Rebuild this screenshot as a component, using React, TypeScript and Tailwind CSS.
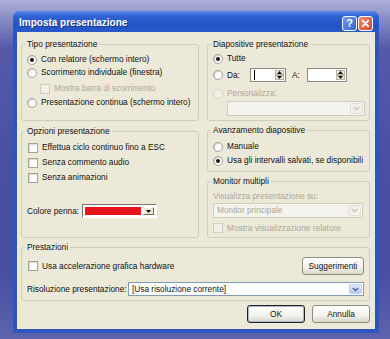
import * as React from "react";
import clsx from "clsx";

type BoxProps = { checked?: boolean; disabled?: boolean };

function Radio({ checked, disabled }: BoxProps) {
  return (
    <span
      className={clsx(
        "flex h-[10px] w-[10px] shrink-0 items-center justify-center rounded-full border",
        disabled
          ? "border-[#d3d0c4] bg-[#f3f1e8]"
          : "border-[#a3a195] bg-white shadow-[inset_1px_1px_1px_rgba(0,0,0,0.18)]"
      )}
    >
      {checked && <span className="h-[4px] w-[4px] rounded-full bg-[#151515]" />}
    </span>
  );
}

function Check({ disabled }: BoxProps) {
  return (
    <span
      className={clsx(
        "block h-[10px] w-[10px] shrink-0 border",
        disabled
          ? "border-[#cfccc0] bg-[#f1efe6]"
          : "border-[#a5a398] bg-white shadow-[inset_1px_1px_1px_rgba(0,0,0,0.15)]"
      )}
    />
  );
}

function Group({
  title,
  className,
  children,
}: {
  title: string;
  className?: string;
  children: React.ReactNode;
}) {
  return (
    <fieldset className={clsx("min-w-0 rounded-[3px] border border-[#d0cdbd] px-[5px]", className)}>
      <legend className="-ml-[2px] px-[2px] leading-[12px] text-[#111]">{title}</legend>
      {children}
    </fieldset>
  );
}

function Chevron({ disabled }: BoxProps) {
  return (
    <span
      className={clsx(
        "flex h-full w-[13px] items-center justify-center rounded-[2px] border",
        disabled
          ? "border-[#e2e0d6] bg-[#f2f0e8]"
          : "border-[#bdd0f6] bg-[linear-gradient(180deg,#dfe8fd,#b7cbf7)]"
      )}
    >
      <svg width="7" height="5" viewBox="0 0 7 5">
        <path
          d="M0.8 1 L3.5 3.6 L6.2 1"
          fill="none"
          stroke={disabled ? "#c8c6bc" : "#4d6185"}
          strokeWidth="1.4"
        />
      </svg>
    </span>
  );
}

function Combo({
  text,
  disabled,
  className,
}: {
  text?: string;
  disabled?: boolean;
  className?: string;
}) {
  return (
    <div
      className={clsx(
        "flex items-center border p-[1px]",
        disabled ? "border-[#cfccc0] bg-[#f4f3ee] text-[#aca899]" : "border-[#7f9db9] bg-white text-[#111]",
        className
      )}
    >
      <span className="flex-1 truncate pl-[2px] leading-[11px]">{text}</span>
      <Chevron disabled={disabled} />
    </div>
  );
}

function Spinner({ caret, className }: { caret?: boolean; className?: string }) {
  return (
    <div className={clsx("flex h-[14px] border border-[#8c8a80] bg-white p-[1px]", className)}>
      <div className="flex flex-1 items-center pl-[2px]">
        {caret && <span className="block h-[10px] w-[1px] bg-black" />}
      </div>
      <div className="flex w-[9px] flex-col">
        <span className="flex flex-1 items-center justify-center border border-[#b5b2a6] bg-[#ece9d8]">
          <svg width="5" height="3" viewBox="0 0 5 3">
            <path d="M0 3 L2.5 0 L5 3 Z" fill="#111" />
          </svg>
        </span>
        <span className="flex flex-1 items-center justify-center border border-[#b5b2a6] bg-[#ece9d8]">
          <svg width="5" height="3" viewBox="0 0 5 3">
            <path d="M0 0 L2.5 3 L5 0 Z" fill="#111" />
          </svg>
        </span>
      </div>
    </div>
  );
}

function Button({ label, primary, className }: { label: string; primary?: boolean; className?: string }) {
  return (
    <div
      className={clsx(
        "flex items-center justify-center rounded-[3px] border bg-[linear-gradient(180deg,#ffffff,#f3f2ec_60%,#d9d6c9)] leading-[11px] text-[#111]",
        primary ? "border-[#222] shadow-[inset_0_0_0_1px_#aab8d6]" : "border-[#8e8d83]",
        className
      )}
    >
      {label}
    </div>
  );
}

export default function App() {
  return (
    <div className="relative h-[339px] w-[390px] overflow-hidden whitespace-nowrap bg-[linear-gradient(180deg,#aeb1d9_0%,#8c90c8_5%,#555ba9_14%,#4950a4_45%,#474ea2_80%,#5d63ae_100%)] pl-[13px] pt-[11px] font-['Liberation_Sans',Arial,sans-serif] text-[8.3px]">
      <div className="flex h-[322px] w-[366px] flex-col rounded-t-[7px] bg-[#2c55bd]">
        {/* title bar */}
        <div className="flex h-[21px] items-center justify-between rounded-t-[7px] bg-[linear-gradient(180deg,#5b8ae6_0%,#2f62d3_25%,#2454c4_70%,#2a5ac6_100%)] pl-[6px] pr-[6px] pt-[1px]">
          <span className="text-[10px] font-bold text-white [text-shadow:1px_1px_0_#1a3a8a]">
            Imposta presentazione
          </span>
          <div className="flex gap-[1px] pt-[2px]">
            <span className="flex h-[15px] w-[15px] items-center justify-center rounded-[3px] border border-white bg-[linear-gradient(135deg,#6f9cf0,#2e63d6)] text-[11px] font-bold leading-none text-white">
              ?
            </span>
            <span className="flex h-[15px] w-[15px] items-center justify-center rounded-[3px] border border-white bg-[linear-gradient(135deg,#ef8a6e,#d5452a)]">
              <svg width="9" height="9" viewBox="0 0 9 9">
                <path d="M1.2 1.2 L7.8 7.8 M7.8 1.2 L1.2 7.8" stroke="#fff" strokeWidth="1.8" />
              </svg>
            </span>
          </div>
        </div>

        {/* client */}
        <div className="mx-[4px] mb-[4px] flex flex-1 flex-col bg-[#ece9d8] pb-[6px] pl-[4px] pr-[5px] pt-[6px] text-[#111]">
          <div className="flex gap-[8px]">
            {/* left column */}
            <div className="flex w-[178px] flex-col gap-[4px]">
              <Group title="Tipo presentazione" className="h-[83px]">
                <div className="flex flex-col pt-[3px]">
                  <div className="flex h-[13px] items-center gap-[4px]">
                    <Radio checked />
                    <span>Con relatore (schermo intero)</span>
                  </div>
                  <div className="flex h-[13px] items-center gap-[4px]">
                    <Radio />
                    <span>Scorrimento individuale (finestra)</span>
                  </div>
                  <div className="mt-[3px] flex h-[13px] items-center gap-[4px] pl-[13px] text-[#aca899]">
                    <Check disabled />
                    <span>Mostra barra di scorrimento</span>
                  </div>
                  <div className="mt-[1px] flex h-[13px] items-center gap-[4px]">
                    <Radio />
                    <span>Presentazione continua (schermo intero)</span>
                  </div>
                </div>
              </Group>

              <Group title="Opzioni presentazione" className="h-[113px]">
                <div className="flex flex-col pl-[1px] pt-[4px]">
                  <div className="flex h-[13px] items-center gap-[4px]">
                    <Check />
                    <span>Effettua ciclo continuo fino a ESC</span>
                  </div>
                  <div className="mt-[2px] flex h-[13px] items-center gap-[4px]">
                    <Check />
                    <span>Senza commento audio</span>
                  </div>
                  <div className="mt-[2px] flex h-[13px] items-center gap-[4px]">
                    <Check />
                    <span>Senza animazioni</span>
                  </div>
                  <div className="-ml-[1px] mt-[20px] flex h-[14px] items-center gap-[3px]">
                    <span>Colore penna:</span>
                    <div className="flex h-[14px] w-[75px] items-stretch border border-t-[#7a786e] border-l-[#7a786e] border-b-[#fff] border-r-[#fff] bg-white p-[2px]">
                      <span className="flex-1 bg-[#e8141c]" />
                      <span className="ml-[2px] flex w-[11px] items-center justify-center border border-t-[#fff] border-l-[#fff] border-b-[#6b6960] border-r-[#6b6960] bg-[#ece9d8]">
                        <svg width="5" height="3" viewBox="0 0 5 3">
                          <path d="M0 0 L2.5 3 L5 0 Z" fill="#000" />
                        </svg>
                      </span>
                    </div>
                  </div>
                </div>
              </Group>
            </div>

            {/* right column */}
            <div className="flex w-[163px] flex-col gap-[3px]">
              <Group title="Diapositive presentazione" className="h-[83px]">
                <div className="flex flex-col pt-[2px]">
                  <div className="flex h-[13px] items-center gap-[4px]">
                    <Radio checked />
                    <span>Tutte</span>
                  </div>
                  <div className="mt-[3px] flex h-[14px] items-center">
                    <Radio />
                    <span className="ml-[4px] w-[23px]">Da:</span>
                    <Spinner caret className="w-[36px]" />
                    <span className="ml-[6px] w-[15px]">A:</span>
                    <Spinner className="w-[40px]" />
                  </div>
                  <div className="mt-[5px] flex h-[13px] items-center gap-[4px] text-[#aca899]">
                    <Radio disabled />
                    <span>Personalizza:</span>
                  </div>
                  <Combo disabled className="ml-[14px] mt-[1px] h-[15px] w-[138px]" />
                </div>
              </Group>

              <Group title="Avanzamento diapositive" className="h-[48px]">
                <div className="flex flex-col pt-[4px]">
                  <div className="flex h-[13px] items-center gap-[4px]">
                    <Radio />
                    <span>Manuale</span>
                  </div>
                  <div className="mt-[1px] flex h-[13px] items-center gap-[4px]">
                    <Radio checked />
                    <span>Usa gli intervalli salvati, se disponibili</span>
                  </div>
                </div>
              </Group>

              <Group title="Monitor multipli" className="h-[63px]">
                <div className="flex flex-col pt-[3px] text-[#aca899]">
                  <span className="h-[12px] leading-[12px]">Visualizza presentazione su:</span>
                  <Combo disabled text="Monitor principale" className="mt-[1px] h-[15px] w-[150px]" />
                  <div className="mt-[4px] flex h-[12px] items-center gap-[4px]">
                    <Check disabled />
                    <span>Mostra visualizzazione relatore</span>
                  </div>
                </div>
              </Group>
            </div>
          </div>

          <Group title="Prestazioni" className="mt-[3px] h-[60px] pr-[5px]">
            <div className="flex flex-col pt-[4px]">
              <div className="flex h-[18px] items-center justify-between">
                <div className="flex items-center gap-[4px] pl-[1px]">
                  <Check />
                  <span>Usa accelerazione grafica hardware</span>
                </div>
                <Button label="Suggerimenti" className="h-[18px] w-[62px]" />
              </div>
              <div className="mt-[7px] flex h-[14px] items-center">
                <span className="w-[101px]">Risoluzione presentazione:</span>
                <Combo text="[Usa risoluzione corrente]" className="h-[14px] flex-1" />
              </div>
            </div>
          </Group>

          <div className="mt-[4px] flex justify-end gap-[7px]">
            <Button label="OK" primary className="h-[18px] w-[58px]" />
            <Button label="Annulla" className="h-[18px] w-[58px]" />
          </div>
        </div>
      </div>
    </div>
  );
}
